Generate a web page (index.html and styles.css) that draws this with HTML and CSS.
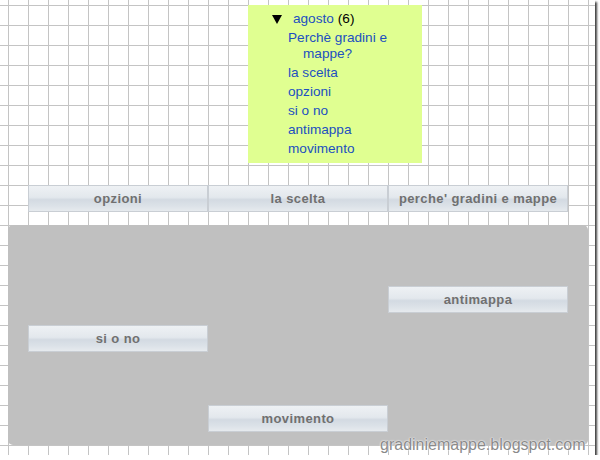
FILE: index.html
```html
<!DOCTYPE html>
<html>
<head>
<meta charset="utf-8">
<link rel="stylesheet" href="styles.css">
</head>
<body>
<div class="frame">
  <div class="archive">
    <div class="year"><span class="toggle"></span><a class="month">agosto</a> <span class="count">(6)</span></div>
    <ul class="posts">
      <li>Perchè gradini e mappe?</li>
      <li>la scelta</li>
      <li>opzioni</li>
      <li>si o no</li>
      <li>antimappa</li>
      <li>movimento</li>
    </ul>
  </div>
  <div class="tabs">
    <div class="btn">opzioni</div>
    <div class="btn">la scelta</div>
    <div class="btn">perche' gradini e mappe</div>
  </div>
  <div class="panel">
    <div class="btn b-anti">antimappa</div>
    <div class="btn b-si">si o no</div>
    <div class="btn b-mov">movimento</div>
  </div>
  <div class="watermark">gradiniemappe.blogspot.com</div>
</div>
</body>
</html>
```
FILE: styles.css
```css
html, body {
  margin: 0;
  padding: 0;
  background: #ffffff;
}
.frame {
  position: relative;
  width: 595px;
  height: 455px;
  box-sizing: border-box;
  padding-top: 5px;
  background-color: #ffffff;
  background-image:
    linear-gradient(to right, #c4c4c4 1px, transparent 1px),
    linear-gradient(to bottom, #c4c4c4 1px, transparent 1px);
  background-size: 20px 20px;
  background-position: 8px 5px;
  box-shadow: 2px 2px 2px rgba(0,0,0,0.75);
  overflow: hidden;
  font-family: "Liberation Sans", Arial, sans-serif;
}
.archive {
  margin-left: 248px;
  width: 174px;
  height: 158px;
  box-sizing: border-box;
  background: #e0ff91;
  padding: 6px 0 0 24px;
  font-size: 13.6px;
  line-height: 16px;
}
.year {
  display: flex;
  align-items: center;
  color: #000;
}
.toggle {
  width: 0;
  height: 0;
  border-left: 5px solid transparent;
  border-right: 5px solid transparent;
  border-top: 9px solid #000;
  margin-right: 11px;
  margin-top: 1px;
}
.month {
  color: #2050c0;
  margin-right: 4px;
}
.posts {
  list-style: none;
  margin: 3px 0 0 16px;
  padding: 0;
  width: 122px;
  color: #2050c0;
}
.posts li {
  padding-left: 15px;
  text-indent: -15px;
  margin-bottom: 3px;
}
.tabs {
  display: flex;
  margin: 22px 0 0 28px;
}
.btn {
  width: 180px;
  height: 27px;
  box-sizing: border-box;
  border: 1px solid #c9ced4;
  background: linear-gradient(to bottom, #eef1f4 0%, #e3e8ed 45%, #d3dae2 55%, #dce2e8 80%, #e6eaee 100%);
  color: #707070;
  font-family: "Liberation Sans", Tahoma, sans-serif;
  font-weight: bold;
  font-size: 13px;
  letter-spacing: 0.4px;
  display: flex;
  align-items: center;
  justify-content: center;
}
.panel {
  margin: 13px 0 0 8px;
  width: 580px;
  height: 220px;
  box-sizing: border-box;
  border-radius: 5px;
  background: #c0c0c0;
  padding-left: 20px;
  display: grid;
  grid-template-columns: 180px 180px 180px;
  align-content: start;
}
.b-anti {
  grid-column: 3;
  grid-row: 1;
  margin-top: 61px;
}
.b-si {
  grid-column: 1;
  grid-row: 2;
  margin-top: 12px;
}
.b-mov {
  grid-column: 2;
  grid-row: 3;
  margin-top: 53px;
}
.watermark {
  position: absolute;
  left: 380px;
  top: 436px;
  font-family: "Liberation Sans", Arial, sans-serif;
  font-size: 16px;
  line-height: 18px;
  color: #8a8a8a;
  text-shadow: 0 0 2px #fff, 0 0 1px #fff;
  white-space: nowrap;
}
```
